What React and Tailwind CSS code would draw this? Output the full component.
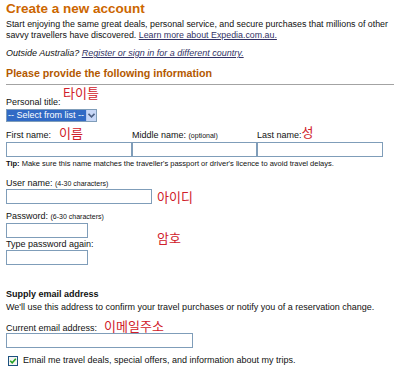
import React from 'react'

const KO = "font-['Noto_Sans_CJK_KR',sans-serif] text-[#d0202a] text-[13px]"
const INPUT = 'block h-[15px] border border-[#7f9db9] bg-white'

function Chevron() {
  return (
    <svg width="7" height="5" viewBox="0 0 7 5">
      <path d="M0.5 0.8 L3.5 3.8 L6.5 0.8" fill="none" stroke="#4d6185" strokeWidth="1.6" />
    </svg>
  )
}

function CheckBox() {
  return (
    <span className="flex h-[10px] w-[10px] items-center justify-center border border-[#1c5180] bg-[#f4f4f0]">
      <svg width="8" height="8" viewBox="0 0 8 8">
        <path d="M1.2 3.8 L3.2 5.8 L6.8 1.8" fill="none" stroke="#21a121" strokeWidth="1.6" />
      </svg>
    </span>
  )
}

export default function App() {
  return (
    <div className="h-[374px] w-[400px] overflow-hidden bg-white px-[6px] font-['Liberation_Sans',Arial,sans-serif] text-[9px] leading-[11px] text-[#111]">
      {/* Heading */}
      <h1 className="mt-[1px] text-[13.5px] font-bold leading-[16px] text-[#cc6600]">Create a new account</h1>
      <p className="mt-[2px] whitespace-nowrap text-[8.85px]">
        Start enjoying the same great deals, personal service, and secure purchases that millions of other
        <br />
        savvy travellers have discovered.{' '}
        <span className="text-[#333366] underline">Learn more about Expedia.com.au.</span>
      </p>
      <p className="mt-[7px] italic">
        Outside Australia?{' '}
        <span className="text-[#333366] underline">Register or sign in for a different country.</span>
      </p>

      <h2 className="mt-[8px] text-[10.7px] font-bold leading-[13px] text-[#b35900]">
        Please provide the following information
      </h2>
      <div className="mt-[4px] h-px bg-[#a3a3a3]" />

      {/* Personal title */}
      <div className="relative mt-[12px]">
        <span className={`absolute left-[57px] top-[-11px] leading-[13px] ${KO}`}>타이틀</span>
        <div>Personal title:</div>
      </div>
      <div className="mt-[1px] flex h-[13px] w-[91px] border border-[#7f9db9] bg-white">
        <div className="flex flex-1 items-center bg-[#316ac5] pl-[1px] text-[9px] leading-[11px] text-white">
          -- Select from list --
        </div>
        <div className="flex w-[10px] items-center justify-center border-l border-[#b4c8f0] bg-[#c7d7f7]">
          <Chevron />
        </div>
      </div>

      {/* Names */}
      <div className="mt-[8px] grid grid-cols-[126px_125px_126px]">
        <div className="h-[11px] whitespace-nowrap">
          First name:<span className={`ml-[8px] leading-[0] ${KO}`}>이름</span>
        </div>
        <div className="h-[11px] whitespace-nowrap">
          Middle name: <span className="text-[7px]">(optional)</span>
        </div>
        <div className="h-[11px] whitespace-nowrap">
          Last name:<span className={`relative top-[-1px] leading-[0] ${KO}`}>성</span>
        </div>
        <div className={`${INPUT} mt-[1px] w-full`} />
        <div className={`${INPUT} mt-[1px] w-full`} />
        <div className={`${INPUT} mt-[1px] w-full`} />
      </div>
      <p className="mt-[2px] text-[7.5px] leading-[10px]">
        <b>Tip:</b> Make sure this name matches the traveller's passport or driver's licence to avoid travel delays.
      </p>

      {/* User name */}
      <div className="mt-[9px] leading-[10px]">
        User name: <span className="text-[7px]">(4-30 characters)</span>
      </div>
      <div className="flex items-center">
        <div className={`${INPUT} w-[146px]`} />
        <span className={`ml-[5px] leading-[13px] ${KO}`}>아이디</span>
      </div>

      {/* Passwords */}
      <div className="flex">
        <div className="w-[146px]">
          <div className="mt-[7px] leading-[10px]">
            Password: <span className="text-[7px]">(6-30 characters)</span>
          </div>
          <div className={`${INPUT} mt-[1px] w-[82px]`} />
          <div className="mt-[1px] leading-[10px]">Type password again:</div>
          <div className={`${INPUT} mt-[1px] w-[82px]`} />
        </div>
        <span className={`ml-[5px] mt-[27px] leading-[13px] ${KO}`}>암호</span>
      </div>

      {/* Email */}
      <h3 className="mt-[24px] font-bold">Supply email address</h3>
      <p className="mt-[2px]">We'll use this address to confirm your travel purchases or notify you of a reservation change.</p>
      <div className="mt-[10px] h-[10px] whitespace-nowrap leading-[10px]">
        Current email address:<span className={`ml-[7px] leading-[0] ${KO}`}>이메일주소</span>
      </div>
      <div className={`${INPUT} w-[187px]`} />
      <div className="mt-[7px] flex items-center">
        <span className="ml-[2px]">
          <CheckBox />
        </span>
        <span className="ml-[5px]">Email me travel deals, special offers, and information about my trips.</span>
      </div>
    </div>
  )
}
